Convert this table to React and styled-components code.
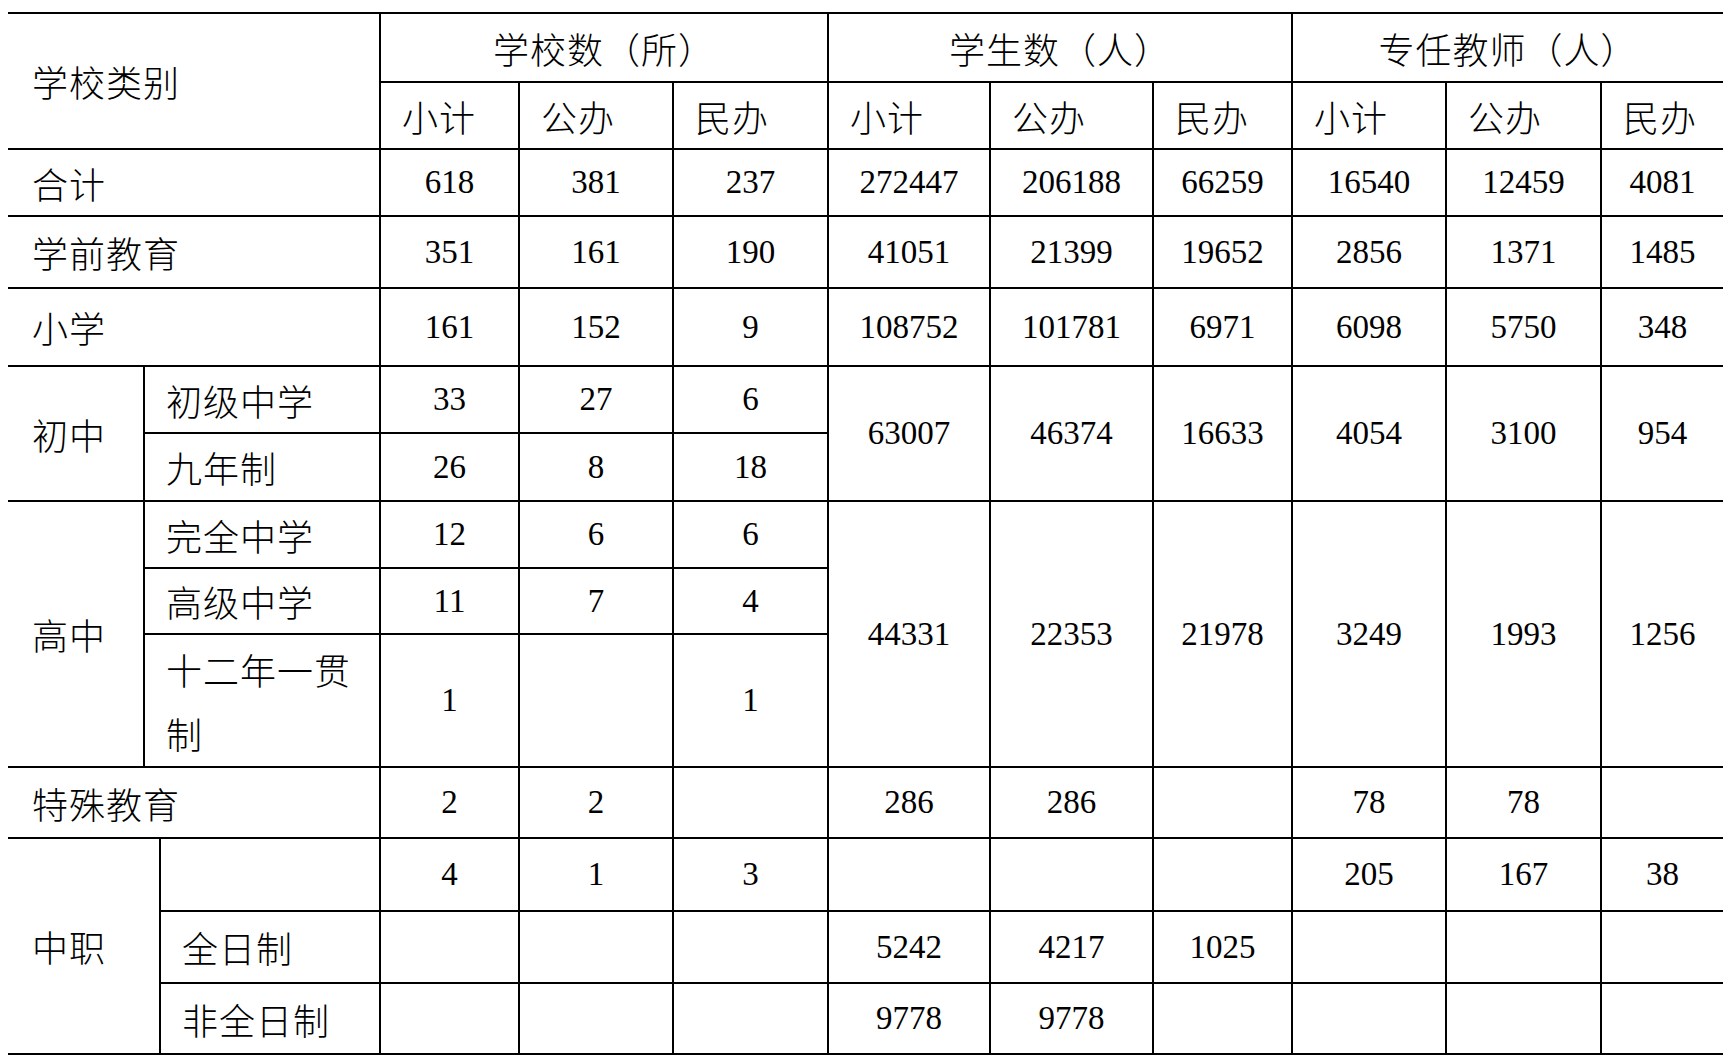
import React from 'react';
import styled, { createGlobalStyle } from 'styled-components';

const GlobalStyle = createGlobalStyle`
  html, body {
    margin: 0;
    padding: 0;
    background: #ffffff;
  }
  body {
    font-family: "Liberation Serif", "Noto Sans CJK SC", serif;
    color: #000;
  }
`;

const COLS = [135, 16, 220, 139, 154, 155, 162, 163, 139, 154, 155, 123];
const ROWS = [69, 67, 67, 72, 78, 67, 68, 67, 66, 133, 71, 73, 72, 71];

const Sheet = styled.div`
  display: grid;
  grid-template-columns: ${COLS.map(w => `${w}px`).join(' ')};
  grid-template-rows: ${ROWS.map(h => `${h}px`).join(' ')};
  width: ${COLS.reduce((a, b) => a + b, 0)}px;
  margin: 12px 0 0 8px;
  border-top: 2px solid #000;
`;

const Cell = styled.div`
  grid-column: ${p => p.$col} / span ${p => p.$cs || 1};
  grid-row: ${p => p.$row} / span ${p => p.$rs || 1};
  box-sizing: border-box;
  border-bottom: 2px solid #000;
  border-left: ${p => (p.$col === 1 ? 'none' : '2px solid #000')};
  display: flex;
  align-items: center;
  justify-content: ${p => (p.$kind === 'text' ? 'flex-start' : 'center')};
  padding: ${p => (p.$kind === 'text' ? `0 8px 0 ${p.$col === 1 ? 24 : 21}px` : '0')};
  font-family: ${p => (p.$kind === 'num' ? '"Liberation Serif", serif' : '"Noto Sans CJK SC", "Noto Sans CJK TC", sans-serif')};
  font-weight: ${p => (p.$kind === 'num' ? 400 : 300)};
  font-size: ${p => (p.$kind === 'num' ? '33px' : '36px')};
  letter-spacing: ${p => (p.$kind === 'num' ? '0' : '1px')};
  line-height: ${p => (p.$wrap ? '64px' : 'normal')};
  white-space: ${p => (p.$wrap ? 'normal' : 'nowrap')};
  word-break: break-all;
`;

const SUB = ['小计', '公办', '民办'];

// number cells from grid column 4 onwards; "skip" marks cells covered by a rowspan above
const numbers = (row, values, spans = {}) =>
  values
    .map((v, i) => ({ col: 4 + i, row, t: v, kind: 'num', rs: spans[i] }))
    .filter(c => c.t !== 'skip');

const cells = [
  { col: 1, row: 1, cs: 3, rs: 2, t: '学校类别', kind: 'text' },
  { col: 4, row: 1, cs: 3, t: '学校数（所）', kind: 'head' },
  { col: 7, row: 1, cs: 3, t: '学生数（人）', kind: 'head' },
  { col: 10, row: 1, cs: 3, t: '专任教师（人）', kind: 'head' },
  ...Array.from({ length: 9 }, (_, i) => ({ col: 4 + i, row: 2, t: SUB[i % 3], kind: 'text' })),

  { col: 1, row: 3, cs: 3, t: '合计', kind: 'text' },
  ...numbers(3, ['618', '381', '237', '272447', '206188', '66259', '16540', '12459', '4081']),

  { col: 1, row: 4, cs: 3, t: '学前教育', kind: 'text' },
  ...numbers(4, ['351', '161', '190', '41051', '21399', '19652', '2856', '1371', '1485']),

  { col: 1, row: 5, cs: 3, t: '小学', kind: 'text' },
  ...numbers(5, ['161', '152', '9', '108752', '101781', '6971', '6098', '5750', '348']),

  { col: 1, row: 6, rs: 2, t: '初中', kind: 'text' },
  { col: 2, row: 6, cs: 2, t: '初级中学', kind: 'text' },
  ...numbers(6, ['33', '27', '6', '63007', '46374', '16633', '4054', '3100', '954'], { 3: 2, 4: 2, 5: 2, 6: 2, 7: 2, 8: 2 }),
  { col: 2, row: 7, cs: 2, t: '九年制', kind: 'text' },
  ...numbers(7, ['26', '8', '18', 'skip', 'skip', 'skip', 'skip', 'skip', 'skip']),

  { col: 1, row: 8, rs: 3, t: '高中', kind: 'text' },
  { col: 2, row: 8, cs: 2, t: '完全中学', kind: 'text' },
  ...numbers(8, ['12', '6', '6', '44331', '22353', '21978', '3249', '1993', '1256'], { 3: 3, 4: 3, 5: 3, 6: 3, 7: 3, 8: 3 }),
  { col: 2, row: 9, cs: 2, t: '高级中学', kind: 'text' },
  ...numbers(9, ['11', '7', '4', 'skip', 'skip', 'skip', 'skip', 'skip', 'skip']),
  { col: 2, row: 10, cs: 2, t: '十二年一贯制', kind: 'text', wrap: true },
  ...numbers(10, ['1', '', '1', 'skip', 'skip', 'skip', 'skip', 'skip', 'skip']),

  { col: 1, row: 11, cs: 3, t: '特殊教育', kind: 'text' },
  ...numbers(11, ['2', '2', '', '286', '286', '', '78', '78', '']),

  { col: 1, row: 12, cs: 2, rs: 3, t: '中职', kind: 'text' },
  { col: 3, row: 12, t: '', kind: 'text' },
  ...numbers(12, ['4', '1', '3', '', '', '', '205', '167', '38']),
  { col: 3, row: 13, t: '全日制', kind: 'text' },
  ...numbers(13, ['', '', '', '5242', '4217', '1025', '', '', '']),
  { col: 3, row: 14, t: '非全日制', kind: 'text' },
  ...numbers(14, ['', '', '', '9778', '9778', '', '', '', '']),
];

const App = () => (
  <>
    <GlobalStyle />
    <Sheet>
      {cells.map(c => (
        <Cell
          key={`${c.row}-${c.col}`}
          $col={c.col}
          $row={c.row}
          $cs={c.cs}
          $rs={c.rs}
          $kind={c.kind}
          $wrap={c.wrap}
        >
          {c.t}
        </Cell>
      ))}
    </Sheet>
  </>
);

export default App;
